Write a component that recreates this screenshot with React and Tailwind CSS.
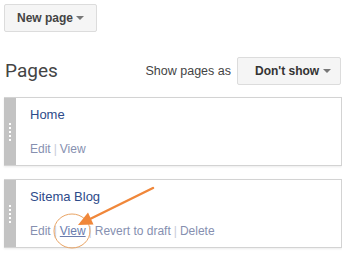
import React from 'react';

const Caret = () => (
  <span className="inline-block w-0 h-0 border-l-[4px] border-r-[4px] border-t-[4px] border-l-transparent border-r-transparent border-t-[#777]" />
);

const Grip = () => (
  <div className="w-[12px] bg-[#c3c3c3] flex flex-col items-center justify-center gap-[2px]">
    {[0, 1, 2, 3, 4].map((i) => (
      <span key={i} className="w-[2px] h-[2px] bg-white" />
    ))}
  </div>
);

const PageCard = ({ title, links, active }) => (
  <div className="flex h-[69px] ml-[4px] border-t border-b border-r border-[#d3d3d3] bg-white shadow-[0_1px_2px_rgba(0,0,0,0.08)]">
    <Grip />
    <div className="flex flex-col pl-[14px] pt-[9px]">
      <span className="text-[13px] leading-[16px] text-[#2d4b8a]">{title}</span>
      <div className="mt-[18px] text-[12px] leading-[16px] text-[#8690b0] flex items-center whitespace-nowrap">
        {links.map((l, i) => (
          <React.Fragment key={l}>
            {i > 0 && <span className="text-[#c9cdd8] mx-[3px]">|</span>}
            <span className={l === active ? 'underline text-[#6a7cae]' : ''}>{l}</span>
          </React.Fragment>
        ))}
      </div>
    </div>
  </div>
);

export default function App() {
  return (
    <div className="relative w-[342px] h-[260px] bg-white overflow-hidden font-['Liberation_Sans',Arial,sans-serif]">
      <div className="pt-[4px] pl-[4px]">
        <button className="h-[28px] w-[93px] flex items-center justify-between pl-[12px] pr-[12px] whitespace-nowrap bg-[#f5f5f5] border border-[#dcdcdc] rounded-[2px] text-[12px] font-bold text-[#444]">
          New page
          <Caret />
        </button>
      </div>

      {/* Header */}
      <div className="flex items-center justify-between mt-[25px] h-[28px] pr-[1px]">
        <h1 className="pl-[5px] text-[19px] leading-[28px] text-[#444] font-['Roboto',sans-serif]">Pages</h1>
        <div className="flex items-center gap-[6px]">
          <span className="text-[12.5px] text-[#444] whitespace-nowrap">Show pages as</span>
          <button className="h-[28px] w-[104px] flex items-center justify-between pl-[17px] pr-[9px] whitespace-nowrap bg-[#f5f5f5] border border-[#dcdcdc] rounded-[2px] text-[12px] font-bold text-[#333]">
            Don't show
            <Caret />
          </button>
        </div>
      </div>

      <div className="mt-[12px] flex flex-col gap-[13px]">
        <PageCard title="Home" links={['Edit', 'View']} />
        <PageCard title="Sitema Blog" links={['Edit', 'View', 'Revert to draft', 'Delete']} active="View" />
      </div>

      {/* annotation */}
      <svg className="absolute left-0 top-0 pointer-events-none" width="342" height="260">
        <ellipse cx="72" cy="231" rx="18" ry="17" fill="none" stroke="#e9a464" strokeWidth="1" />
        <line x1="153" y1="188" x2="88" y2="220" stroke="#f0873a" strokeWidth="2.5" strokeLinecap="round" />
        <polygon points="78,225 93.5,224.5 88,212.5" fill="#f0873a" />
      </svg>
    </div>
  );
}
